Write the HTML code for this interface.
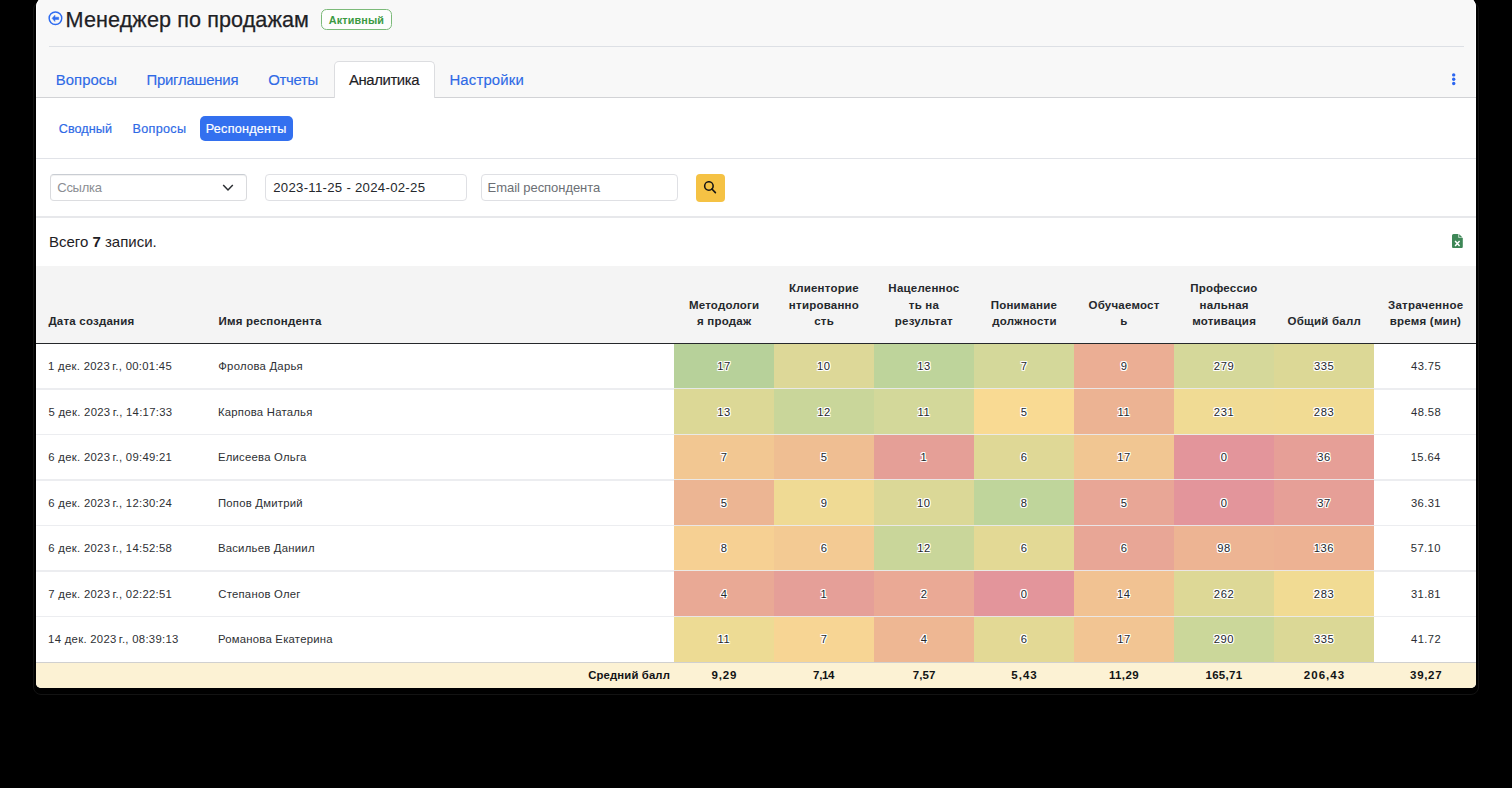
<!DOCTYPE html>
<html><head><meta charset="utf-8">
<style>
*{margin:0;padding:0;box-sizing:border-box}
html,body{width:1512px;height:788px;background:#000;overflow:hidden;font-family:"Liberation Sans",sans-serif}
.a{position:absolute}
.t{position:absolute;white-space:nowrap;line-height:1}
.num{text-shadow:-1px -1px 0 #fff,1px -1px 0 #fff,-1px 1px 0 #fff,1px 1px 0 #fff,0 1px 0 #fff,0 -1px 0 #fff,1px 0 0 #fff,-1px 0 0 #fff}
</style></head><body>

<div class="a" style="left:33px;top:3px;width:1446px;height:691.5px;border-radius:6px 6px 8px 8px;border:1.5px solid #131313"></div>
<div class="a" style="left:36px;top:-3px;width:1440px;height:691px;border-radius:10px 10px 5px 5px;background:#fff"></div>
<div class="a" style="left:36px;top:-3px;width:1440px;height:100.4px;background:#f8f8f8;border-radius:10px 10px 0 0;box-shadow:inset 1px 0 0 #fff,inset -1px 0 0 #fff"></div>
<div class="a" style="left:36px;top:96.9px;width:1440px;height:1px;background:#d2d3d6"></div>
<div class="a" style="left:48.6px;top:45.8px;width:1415.6px;height:1px;background:#dde0e5"></div>
<svg class="a" style="left:48px;top:11px" width="15" height="15" viewBox="0 0 15 15"><circle cx="7.45" cy="7.25" r="6.3" fill="none" stroke="#2f6cf0" stroke-width="1.45"/><path d="M4.1 7.35 L6.95 4.15 L6.95 6.2 L10.7 6.2 L10.7 8.5 L6.95 8.5 L6.95 10.55 Z" fill="#2f6cf0" stroke="#2f6cf0" stroke-width="0.5" stroke-linejoin="round"/></svg>
<div class="a" style="left:320.5px;top:9px;width:71.5px;height:20.6px;border:1.5px solid #7bba79;border-radius:5.5px;background:#fdfdfd"></div>
<div class="a" style="left:334px;top:61.4px;width:100.5px;height:36.6px;background:#fff;border:1px solid #dcdde0;border-bottom:none;border-radius:5px 5px 0 0"></div>
<svg class="a" style="left:1450px;top:71px" width="8" height="16" viewBox="0 0 8 16"><circle cx="3.7" cy="3.9" r="1.7" fill="#2c66f0"/><circle cx="3.7" cy="8.2" r="1.7" fill="#2c66f0"/><circle cx="3.7" cy="12.5" r="1.7" fill="#2c66f0"/></svg>
<div class="a" style="left:199.6px;top:115.5px;width:93px;height:25.1px;background:#3370ef;border-radius:5px"></div>
<div class="a" style="left:36px;top:158px;width:1440px;height:1px;background:#e1e3e8"></div>
<div class="a" style="left:49.6px;top:174.1px;width:197.5px;height:27.3px;border:1px solid #d9dadd;border-top-color:#c9cdd3;border-bottom:1.5px solid #dcdde0;border-radius:4px;box-shadow:inset 0 1px 0 rgba(0,0,0,.05)"></div>
<svg class="a" style="left:222px;top:184px" width="12" height="8" viewBox="0 0 12 8"><path d="M1.2 1 L6 5.9 L10.8 1" fill="none" stroke="#2a2d31" stroke-width="1.5"/></svg>
<div class="a" style="left:265.3px;top:174.1px;width:201.3px;height:27.3px;border:1px solid #dfe0e4;border-radius:4px"></div>
<div class="a" style="left:480.7px;top:174.1px;width:197.5px;height:27.3px;border:1px solid #dfe0e4;border-radius:4px"></div>
<div class="a" style="left:696px;top:174px;width:28.7px;height:27.5px;background:#f5c244;border-radius:4px"></div>
<svg class="a" style="left:703px;top:181px" width="14" height="14" viewBox="0 0 14 14"><circle cx="5.9" cy="5.0" r="4.25" fill="none" stroke="#141414" stroke-width="1.55"/><path d="M8.9 8.0 L12.4 11.6" stroke="#141414" stroke-width="1.6" stroke-linecap="round"/></svg>
<div class="a" style="left:36px;top:216.3px;width:1440px;height:1.6px;background:#e7e8eb"></div>
<svg class="a" style="left:1452px;top:234px" width="11" height="14.2" viewBox="0 0 11 14.2"><path d="M1.6 0 H6.4 V3.3 Q6.4 4.1 7.2 4.1 H10.8 V12.6 Q10.8 14.2 9.2 14.2 H1.6 Q0 14.2 0 12.6 V1.6 Q0 0 1.6 0Z" fill="#3e8757"/><path d="M7.2 0.3 L10.6 3.6 H7.7 Q7.2 3.6 7.2 3.1Z" fill="#3e8757"/><path d="M3.1 6.9 L7.6 12 M7.6 6.9 L3.1 12" stroke="#fff" stroke-width="1.5"/></svg>
<div class="a" style="left:36px;top:265.5px;width:1440px;height:77.8px;background:#f4f4f4"></div>
<div class="a" style="left:36px;top:342.8px;width:1440px;height:1.2px;background:#25282b"></div>
<div class="a" style="left:674px;top:343.80px;width:100px;height:45.50px;background:#b7d19a"></div>
<div class="a" style="left:774px;top:343.80px;width:100px;height:45.50px;background:#ddd898"></div>
<div class="a" style="left:874px;top:343.80px;width:100px;height:45.50px;background:#bed49b"></div>
<div class="a" style="left:974px;top:343.80px;width:100px;height:45.50px;background:#d4d89a"></div>
<div class="a" style="left:1074px;top:343.80px;width:100px;height:45.50px;background:#ebae94"></div>
<div class="a" style="left:1174px;top:343.80px;width:100px;height:45.50px;background:#d5d89a"></div>
<div class="a" style="left:1274px;top:343.80px;width:100px;height:45.50px;background:#dcd896"></div>
<div class="a" style="left:36px;top:388.00px;width:1440px;height:1.8px;background:rgba(234,235,238,.9)"></div>
<div class="a" style="left:674px;top:389.30px;width:100px;height:45.50px;background:#dcd896"></div>
<div class="a" style="left:774px;top:389.30px;width:100px;height:45.50px;background:#c9d69a"></div>
<div class="a" style="left:874px;top:389.30px;width:100px;height:45.50px;background:#d3d89a"></div>
<div class="a" style="left:974px;top:389.30px;width:100px;height:45.50px;background:#f9da93"></div>
<div class="a" style="left:1074px;top:389.30px;width:100px;height:45.50px;background:#ecb393"></div>
<div class="a" style="left:1174px;top:389.30px;width:100px;height:45.50px;background:#f0db94"></div>
<div class="a" style="left:1274px;top:389.30px;width:100px;height:45.50px;background:#f1db93"></div>
<div class="a" style="left:36px;top:433.50px;width:1440px;height:1.8px;background:rgba(234,235,238,.9)"></div>
<div class="a" style="left:674px;top:434.80px;width:100px;height:45.50px;background:#f2c792"></div>
<div class="a" style="left:774px;top:434.80px;width:100px;height:45.50px;background:#efbe92"></div>
<div class="a" style="left:874px;top:434.80px;width:100px;height:45.50px;background:#e59f97"></div>
<div class="a" style="left:974px;top:434.80px;width:100px;height:45.50px;background:#dfd896"></div>
<div class="a" style="left:1074px;top:434.80px;width:100px;height:45.50px;background:#f1c692"></div>
<div class="a" style="left:1174px;top:434.80px;width:100px;height:45.50px;background:#e3959b"></div>
<div class="a" style="left:1274px;top:434.80px;width:100px;height:45.50px;background:#e69f97"></div>
<div class="a" style="left:36px;top:479.00px;width:1440px;height:1.8px;background:rgba(234,235,238,.9)"></div>
<div class="a" style="left:674px;top:480.30px;width:100px;height:45.50px;background:#ecb593"></div>
<div class="a" style="left:774px;top:480.30px;width:100px;height:45.50px;background:#efda94"></div>
<div class="a" style="left:874px;top:480.30px;width:100px;height:45.50px;background:#dbd897"></div>
<div class="a" style="left:974px;top:480.30px;width:100px;height:45.50px;background:#bfd59b"></div>
<div class="a" style="left:1074px;top:480.30px;width:100px;height:45.50px;background:#e8a696"></div>
<div class="a" style="left:1174px;top:480.30px;width:100px;height:45.50px;background:#e3959b"></div>
<div class="a" style="left:1274px;top:480.30px;width:100px;height:45.50px;background:#e69f97"></div>
<div class="a" style="left:36px;top:524.50px;width:1440px;height:1.8px;background:rgba(234,235,238,.9)"></div>
<div class="a" style="left:674px;top:525.80px;width:100px;height:45.50px;background:#f6d093"></div>
<div class="a" style="left:774px;top:525.80px;width:100px;height:45.50px;background:#f3ca93"></div>
<div class="a" style="left:874px;top:525.80px;width:100px;height:45.50px;background:#c9d69a"></div>
<div class="a" style="left:974px;top:525.80px;width:100px;height:45.50px;background:#e3d995"></div>
<div class="a" style="left:1074px;top:525.80px;width:100px;height:45.50px;background:#e8a696"></div>
<div class="a" style="left:1174px;top:525.80px;width:100px;height:45.50px;background:#edb493"></div>
<div class="a" style="left:1274px;top:525.80px;width:100px;height:45.50px;background:#edb293"></div>
<div class="a" style="left:36px;top:570.00px;width:1440px;height:1.8px;background:rgba(234,235,238,.9)"></div>
<div class="a" style="left:674px;top:571.30px;width:100px;height:45.50px;background:#e9a995"></div>
<div class="a" style="left:774px;top:571.30px;width:100px;height:45.50px;background:#e59f98"></div>
<div class="a" style="left:874px;top:571.30px;width:100px;height:45.50px;background:#eaa995"></div>
<div class="a" style="left:974px;top:571.30px;width:100px;height:45.50px;background:#e3959b"></div>
<div class="a" style="left:1074px;top:571.30px;width:100px;height:45.50px;background:#f1c292"></div>
<div class="a" style="left:1174px;top:571.30px;width:100px;height:45.50px;background:#ddd896"></div>
<div class="a" style="left:1274px;top:571.30px;width:100px;height:45.50px;background:#f1db93"></div>
<div class="a" style="left:36px;top:615.50px;width:1440px;height:1.8px;background:rgba(234,235,238,.9)"></div>
<div class="a" style="left:674px;top:616.80px;width:100px;height:45.50px;background:#eddb94"></div>
<div class="a" style="left:774px;top:616.80px;width:100px;height:45.50px;background:#f7d594"></div>
<div class="a" style="left:874px;top:616.80px;width:100px;height:45.50px;background:#eeb793"></div>
<div class="a" style="left:974px;top:616.80px;width:100px;height:45.50px;background:#e3d995"></div>
<div class="a" style="left:1074px;top:616.80px;width:100px;height:45.50px;background:#f2c593"></div>
<div class="a" style="left:1174px;top:616.80px;width:100px;height:45.50px;background:#cbd79a"></div>
<div class="a" style="left:1274px;top:616.80px;width:100px;height:45.50px;background:#dbd896"></div>
<div class="a" style="left:36px;top:661.6px;width:1440px;height:26.4px;background:#fcf2d4;border-top:1.6px solid #d0d0d0;border-radius:0 0 5px 5px"></div>
<div class="t" style="left:65.61px;top:9px;font-size:21.6px;color:#1e2125;letter-spacing:0.09px;-webkit-text-stroke:0.25px #1e2125;">Менеджер по продажам</div>
<div class="t" style="left:328.83px;top:15px;font-size:10.8px;color:#3c9a43;letter-spacing:0.13px;font-weight:bold;">Активный</div>
<div class="t" style="left:55.74px;top:73px;font-size:14.9px;color:#2f6ae6;letter-spacing:0.04px;-webkit-text-stroke:0.15px #2f6ae6;">Вопросы</div>
<div class="t" style="left:146.44px;top:73px;font-size:14.9px;color:#2f6ae6;letter-spacing:-0.21px;-webkit-text-stroke:0.15px #2f6ae6;">Приглашения</div>
<div class="t" style="left:268.2px;top:73px;font-size:14.9px;color:#2f6ae6;letter-spacing:-0.27px;-webkit-text-stroke:0.15px #2f6ae6;">Отчеты</div>
<div class="t" style="left:449.44px;top:73px;font-size:14.9px;color:#2f6ae6;letter-spacing:0.17px;-webkit-text-stroke:0.15px #2f6ae6;">Настройки</div>
<div class="t" style="left:348.9px;top:73px;font-size:14.9px;color:#1e2125;letter-spacing:-0.38px;-webkit-text-stroke:0.15px #1e2125;">Аналитика</div>
<div class="t" style="left:58.81px;top:123px;font-size:12.6px;color:#2f6ae6;letter-spacing:0.06px;-webkit-text-stroke:0.2px #2f6ae6;">Сводный</div>
<div class="t" style="left:132.52px;top:123px;font-size:12.6px;color:#2f6ae6;letter-spacing:0.32px;-webkit-text-stroke:0.2px #2f6ae6;">Вопросы</div>
<div class="t" style="left:205.77px;top:123px;font-size:12.6px;color:#ffffff;letter-spacing:0.25px;-webkit-text-stroke:0.2px #ffffff;">Респонденты</div>
<div class="t" style="left:57.29px;top:181px;font-size:13px;color:#8b8e93;letter-spacing:-0.28px;">Ссылка</div>
<div class="t" style="left:273.18px;top:181px;font-size:13.2px;color:#25282c;letter-spacing:0.28px;">2023-11-25 - 2024-02-25</div>
<div class="t" style="left:487.58px;top:181px;font-size:13px;color:#6c6f74;letter-spacing:-0.06px;">Email респондента</div>
<div class="t" style="left:49.03px;top:234px;font-size:15px;color:#1e2125;letter-spacing:-0.01px;">Всего <b>7</b> записи.</div>
<div class="t" style="left:48.4px;top:316px;font-size:11.5px;color:#25282c;letter-spacing:0.22px;font-weight:bold;">Дата создания</div>
<div class="t" style="left:218.48px;top:316px;font-size:11.5px;color:#25282c;letter-spacing:0.22px;font-weight:bold;">Имя респондента</div>
<div class="t" style="left:688.91px;top:300px;font-size:11.5px;color:#25282c;letter-spacing:0.22px;font-weight:bold;">Методологи</div>
<div class="t" style="left:696.96px;top:316px;font-size:11.5px;color:#25282c;letter-spacing:0.22px;font-weight:bold;">я продаж</div>
<div class="t" style="left:788.93px;top:283px;font-size:11.5px;color:#25282c;letter-spacing:0.22px;font-weight:bold;">Клиенторие</div>
<div class="t" style="left:788.87px;top:300px;font-size:11.5px;color:#25282c;letter-spacing:0.22px;font-weight:bold;">нтированно</div>
<div class="t" style="left:814.26px;top:316px;font-size:11.5px;color:#25282c;letter-spacing:0.22px;font-weight:bold;">сть</div>
<div class="t" style="left:888.36px;top:283px;font-size:11.5px;color:#25282c;letter-spacing:0.22px;font-weight:bold;">Нацеленнос</div>
<div class="t" style="left:908.81px;top:300px;font-size:11.5px;color:#25282c;letter-spacing:0.22px;font-weight:bold;">ть на</div>
<div class="t" style="left:894.82px;top:316px;font-size:11.5px;color:#25282c;letter-spacing:0.22px;font-weight:bold;">результат</div>
<div class="t" style="left:990.67px;top:300px;font-size:11.5px;color:#25282c;letter-spacing:0.22px;font-weight:bold;">Понимание</div>
<div class="t" style="left:992.3px;top:316px;font-size:11.5px;color:#25282c;letter-spacing:0.22px;font-weight:bold;">должности</div>
<div class="t" style="left:1088.52px;top:300px;font-size:11.5px;color:#25282c;letter-spacing:0.22px;font-weight:bold;">Обучаемост</div>
<div class="t" style="left:1120.32px;top:316px;font-size:11.5px;color:#25282c;letter-spacing:0.22px;font-weight:bold;">ь</div>
<div class="t" style="left:1190.27px;top:283px;font-size:11.5px;color:#25282c;letter-spacing:0.22px;font-weight:bold;">Профессио</div>
<div class="t" style="left:1199.49px;top:300px;font-size:11.5px;color:#25282c;letter-spacing:0.22px;font-weight:bold;">нальная</div>
<div class="t" style="left:1192.17px;top:316px;font-size:11.5px;color:#25282c;letter-spacing:0.22px;font-weight:bold;">мотивация</div>
<div class="t" style="left:1287.56px;top:316px;font-size:11.5px;color:#25282c;letter-spacing:0.22px;font-weight:bold;">Общий балл</div>
<div class="t" style="left:1388.08px;top:300px;font-size:11.5px;color:#25282c;letter-spacing:0.22px;font-weight:bold;">Затраченное</div>
<div class="t" style="left:1389.78px;top:316px;font-size:11.5px;color:#25282c;letter-spacing:0.22px;font-weight:bold;">время (мин)</div>
<div class="t" style="left:48.09px;top:361px;font-size:11.3px;color:#2e3034;letter-spacing:0.3px;">1 дек. 2023 г., 00:01:45</div>
<div class="t" style="left:218.27px;top:361px;font-size:11.3px;color:#2e3034;letter-spacing:0.25px;">Фролова Дарья</div>
<div class="t num" style="left:717.17px;top:361px;font-size:11.2px;color:#24272b;letter-spacing:0.55px;">17</div>
<div class="t num" style="left:817.09px;top:361px;font-size:11.2px;color:#24272b;letter-spacing:0.55px;">10</div>
<div class="t num" style="left:917.17px;top:361px;font-size:11.2px;color:#24272b;letter-spacing:0.55px;">13</div>
<div class="t num" style="left:1020.65px;top:361px;font-size:11.2px;color:#24272b;letter-spacing:0.55px;">7</div>
<div class="t num" style="left:1120.65px;top:361px;font-size:11.2px;color:#24272b;letter-spacing:0.55px;">9</div>
<div class="t num" style="left:1213.87px;top:361px;font-size:11.2px;color:#24272b;letter-spacing:0.55px;">279</div>
<div class="t num" style="left:1313.96px;top:361px;font-size:11.2px;color:#24272b;letter-spacing:0.55px;">335</div>
<div class="t" style="left:1411.03px;top:361px;font-size:11.2px;color:#2a2d31;letter-spacing:0.4px;">43.75</div>
<div class="t" style="left:48.45px;top:407px;font-size:11.3px;color:#2e3034;letter-spacing:0.3px;">5 дек. 2023 г., 14:17:33</div>
<div class="t" style="left:217.92px;top:407px;font-size:11.3px;color:#2e3034;letter-spacing:0.25px;">Карпова Наталья</div>
<div class="t num" style="left:717.17px;top:407px;font-size:11.2px;color:#24272b;letter-spacing:0.55px;">13</div>
<div class="t num" style="left:817.17px;top:407px;font-size:11.2px;color:#24272b;letter-spacing:0.55px;">12</div>
<div class="t num" style="left:917.59px;top:407px;font-size:11.2px;color:#24272b;letter-spacing:0.55px;">11</div>
<div class="t num" style="left:1020.74px;top:407px;font-size:11.2px;color:#24272b;letter-spacing:0.55px;">5</div>
<div class="t num" style="left:1117.59px;top:407px;font-size:11.2px;color:#24272b;letter-spacing:0.55px;">11</div>
<div class="t num" style="left:1213.87px;top:407px;font-size:11.2px;color:#24272b;letter-spacing:0.55px;">231</div>
<div class="t num" style="left:1313.87px;top:407px;font-size:11.2px;color:#24272b;letter-spacing:0.55px;">283</div>
<div class="t" style="left:1411.03px;top:407px;font-size:11.2px;color:#2a2d31;letter-spacing:0.4px;">48.58</div>
<div class="t" style="left:48.27px;top:452px;font-size:11.3px;color:#2e3034;letter-spacing:0.3px;">6 дек. 2023 г., 09:49:21</div>
<div class="t" style="left:217.92px;top:452px;font-size:11.3px;color:#2e3034;letter-spacing:0.25px;">Елисеева Ольга</div>
<div class="t num" style="left:720.65px;top:452px;font-size:11.2px;color:#24272b;letter-spacing:0.55px;">7</div>
<div class="t num" style="left:820.74px;top:452px;font-size:11.2px;color:#24272b;letter-spacing:0.55px;">5</div>
<div class="t num" style="left:920.56px;top:452px;font-size:11.2px;color:#24272b;letter-spacing:0.55px;">1</div>
<div class="t num" style="left:1020.65px;top:452px;font-size:11.2px;color:#24272b;letter-spacing:0.55px;">6</div>
<div class="t num" style="left:1117.17px;top:452px;font-size:11.2px;color:#24272b;letter-spacing:0.55px;">17</div>
<div class="t num" style="left:1220.65px;top:452px;font-size:11.2px;color:#24272b;letter-spacing:0.55px;">0</div>
<div class="t num" style="left:1317.35px;top:452px;font-size:11.2px;color:#24272b;letter-spacing:0.55px;">36</div>
<div class="t" style="left:1410.68px;top:452px;font-size:11.2px;color:#2a2d31;letter-spacing:0.4px;">15.64</div>
<div class="t" style="left:48.27px;top:498px;font-size:11.3px;color:#2e3034;letter-spacing:0.3px;">6 дек. 2023 г., 12:30:24</div>
<div class="t" style="left:217.92px;top:498px;font-size:11.3px;color:#2e3034;letter-spacing:0.25px;">Попов Дмитрий</div>
<div class="t num" style="left:720.74px;top:498px;font-size:11.2px;color:#24272b;letter-spacing:0.55px;">5</div>
<div class="t num" style="left:820.65px;top:498px;font-size:11.2px;color:#24272b;letter-spacing:0.55px;">9</div>
<div class="t num" style="left:917.09px;top:498px;font-size:11.2px;color:#24272b;letter-spacing:0.55px;">10</div>
<div class="t num" style="left:1020.74px;top:498px;font-size:11.2px;color:#24272b;letter-spacing:0.55px;">8</div>
<div class="t num" style="left:1120.74px;top:498px;font-size:11.2px;color:#24272b;letter-spacing:0.55px;">5</div>
<div class="t num" style="left:1220.65px;top:498px;font-size:11.2px;color:#24272b;letter-spacing:0.55px;">0</div>
<div class="t num" style="left:1317.35px;top:498px;font-size:11.2px;color:#24272b;letter-spacing:0.55px;">37</div>
<div class="t" style="left:1410.94px;top:498px;font-size:11.2px;color:#2a2d31;letter-spacing:0.4px;">36.31</div>
<div class="t" style="left:48.27px;top:543px;font-size:11.3px;color:#2e3034;letter-spacing:0.3px;">6 дек. 2023 г., 14:52:58</div>
<div class="t" style="left:217.92px;top:543px;font-size:11.3px;color:#2e3034;letter-spacing:0.25px;">Васильев Даниил</div>
<div class="t num" style="left:720.74px;top:543px;font-size:11.2px;color:#24272b;letter-spacing:0.55px;">8</div>
<div class="t num" style="left:820.65px;top:543px;font-size:11.2px;color:#24272b;letter-spacing:0.55px;">6</div>
<div class="t num" style="left:917.17px;top:543px;font-size:11.2px;color:#24272b;letter-spacing:0.55px;">12</div>
<div class="t num" style="left:1020.65px;top:543px;font-size:11.2px;color:#24272b;letter-spacing:0.55px;">6</div>
<div class="t num" style="left:1120.65px;top:543px;font-size:11.2px;color:#24272b;letter-spacing:0.55px;">6</div>
<div class="t num" style="left:1217.26px;top:543px;font-size:11.2px;color:#24272b;letter-spacing:0.55px;">98</div>
<div class="t num" style="left:1313.78px;top:543px;font-size:11.2px;color:#24272b;letter-spacing:0.55px;">136</div>
<div class="t" style="left:1410.85px;top:543px;font-size:11.2px;color:#2a2d31;letter-spacing:0.4px;">57.10</div>
<div class="t" style="left:48.27px;top:589px;font-size:11.3px;color:#2e3034;letter-spacing:0.3px;">7 дек. 2023 г., 02:22:51</div>
<div class="t" style="left:218.27px;top:589px;font-size:11.3px;color:#2e3034;letter-spacing:0.25px;">Степанов Олег</div>
<div class="t num" style="left:720.74px;top:589px;font-size:11.2px;color:#24272b;letter-spacing:0.55px;">4</div>
<div class="t num" style="left:820.56px;top:589px;font-size:11.2px;color:#24272b;letter-spacing:0.55px;">1</div>
<div class="t num" style="left:920.65px;top:589px;font-size:11.2px;color:#24272b;letter-spacing:0.55px;">2</div>
<div class="t num" style="left:1020.65px;top:589px;font-size:11.2px;color:#24272b;letter-spacing:0.55px;">0</div>
<div class="t num" style="left:1117.09px;top:589px;font-size:11.2px;color:#24272b;letter-spacing:0.55px;">14</div>
<div class="t num" style="left:1213.87px;top:589px;font-size:11.2px;color:#24272b;letter-spacing:0.55px;">262</div>
<div class="t num" style="left:1313.87px;top:589px;font-size:11.2px;color:#24272b;letter-spacing:0.55px;">283</div>
<div class="t" style="left:1410.94px;top:589px;font-size:11.2px;color:#2a2d31;letter-spacing:0.4px;">31.81</div>
<div class="t" style="left:48.09px;top:634px;font-size:11.3px;color:#2e3034;letter-spacing:0.3px;">14 дек. 2023 г., 08:39:13</div>
<div class="t" style="left:217.92px;top:634px;font-size:11.3px;color:#2e3034;letter-spacing:0.25px;">Романова Екатерина</div>
<div class="t num" style="left:717.59px;top:634px;font-size:11.2px;color:#24272b;letter-spacing:0.55px;">11</div>
<div class="t num" style="left:820.65px;top:634px;font-size:11.2px;color:#24272b;letter-spacing:0.55px;">7</div>
<div class="t num" style="left:920.74px;top:634px;font-size:11.2px;color:#24272b;letter-spacing:0.55px;">4</div>
<div class="t num" style="left:1020.65px;top:634px;font-size:11.2px;color:#24272b;letter-spacing:0.55px;">6</div>
<div class="t num" style="left:1117.17px;top:634px;font-size:11.2px;color:#24272b;letter-spacing:0.55px;">17</div>
<div class="t num" style="left:1213.78px;top:634px;font-size:11.2px;color:#24272b;letter-spacing:0.55px;">290</div>
<div class="t num" style="left:1313.96px;top:634px;font-size:11.2px;color:#24272b;letter-spacing:0.55px;">335</div>
<div class="t" style="left:1411.03px;top:634px;font-size:11.2px;color:#2a2d31;letter-spacing:0.4px;">41.72</div>
<div class="t" style="left:588.25px;top:670px;font-size:11.3px;color:#111315;letter-spacing:0.15px;font-weight:bold;">Средний балл</div>
<div class="t" style="left:711.39px;top:670px;font-size:11.5px;color:#111315;letter-spacing:0.92px;font-weight:bold;">9,29</div>
<div class="t" style="left:813.04px;top:670px;font-size:11.5px;color:#111315;letter-spacing:-0.3px;font-weight:bold;">7,14</div>
<div class="t" style="left:912.64px;top:670px;font-size:11.5px;color:#111315;letter-spacing:0.15px;font-weight:bold;">7,57</div>
<div class="t" style="left:1011.37px;top:670px;font-size:11.5px;color:#111315;letter-spacing:0.99px;font-weight:bold;">5,43</div>
<div class="t" style="left:1108.88px;top:670px;font-size:11.5px;color:#111315;letter-spacing:0.42px;font-weight:bold;">11,29</div>
<div class="t" style="left:1205.48px;top:670px;font-size:11.5px;color:#111315;letter-spacing:0.29px;font-weight:bold;">165,71</div>
<div class="t" style="left:1303.74px;top:670px;font-size:11.5px;color:#111315;letter-spacing:1.05px;font-weight:bold;">206,43</div>
<div class="t" style="left:1410.07px;top:670px;font-size:11.5px;color:#111315;letter-spacing:0.69px;font-weight:bold;">39,27</div>
</body></html>
